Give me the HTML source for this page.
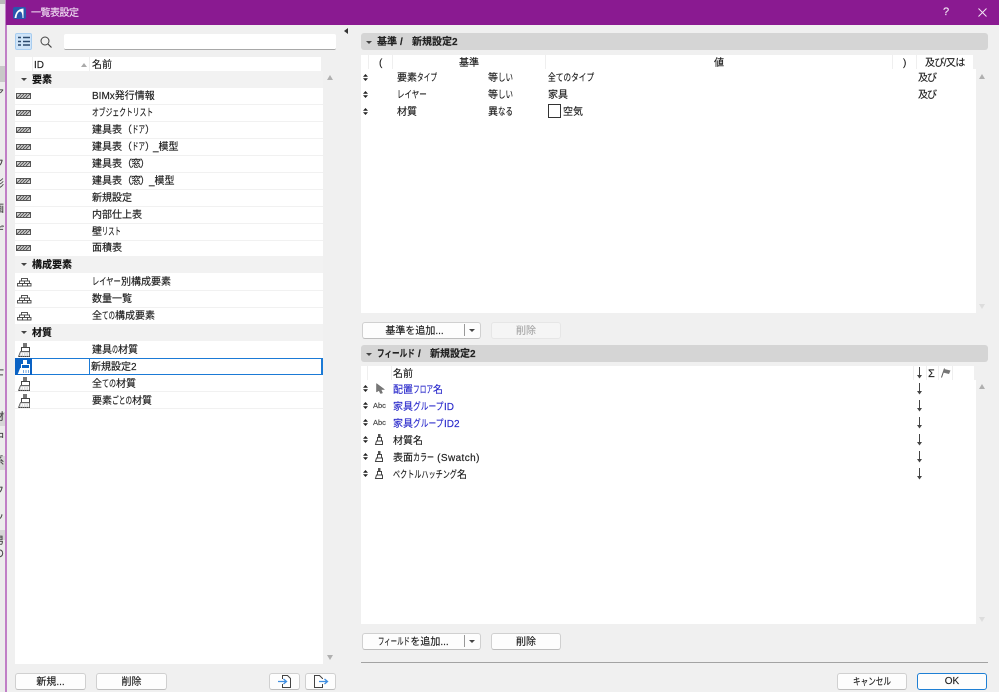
<!DOCTYPE html>
<html lang="ja"><head><meta charset="utf-8"><title>一覧表設定</title>
<style>
html,body{margin:0;padding:0;background:#f0f0f0;}
body{width:999px;height:692px;position:relative;overflow:hidden;font-family:"Liberation Sans","Noto Sans CJK JP",sans-serif;font-size:10px;color:#1c1c1c;-webkit-text-stroke:.15px currentColor;}
.a{position:absolute;}
.t{position:absolute;white-space:nowrap;line-height:14px;height:14px;margin-top:2px;}
.n{display:inline-block;white-space:nowrap;transform-origin:0 0;}
.b{font-weight:bold;color:#111;}
.bl{color:#2a2acb;}
.w{position:absolute;background:#fff;}
.sep{position:absolute;background:#f1f1f1;height:1px;left:15px;width:308px;}
.grp{position:absolute;background:#f2f2f2;left:15px;width:308px;height:17px;}
.btn{position:absolute;box-sizing:border-box;background:#fdfdfd;border:1px solid #d0d0d0;border-bottom:1.5px solid #bdbdbd;border-radius:3px;text-align:center;line-height:17px;height:17px;color:#222;}
.tri{position:absolute;width:0;height:0;border-left:3px solid transparent;border-right:3px solid transparent;border-top:3px solid #444;}
.up{position:absolute;width:0;height:0;border-left:3.5px solid transparent;border-right:3.5px solid transparent;border-bottom:5px solid #b0b0b0;}
.dn{position:absolute;width:0;height:0;border-left:3.5px solid transparent;border-right:3.5px solid transparent;border-top:5px solid #b0b0b0;}
.bar{position:absolute;left:361px;width:627px;height:17px;background:#d5d5d5;border-radius:3px;}
.vl{position:absolute;width:1px;background:#efefef;}
svg{position:absolute;overflow:visible;}
.strip{position:absolute;left:0;top:0;width:5px;height:692px;overflow:hidden;background:#ececec;}
.strip div{position:absolute;left:-6px;font-size:10px;line-height:10px;color:#444;}
.strip i{position:absolute;left:0;width:5px;background:#d6d6d6;}
</style></head><body>
<svg width="0" height="0" style="position:absolute">
<defs>
<g id="hatch"><rect x=".5" y=".5" width="14" height="5" fill="#d8d8d8" stroke="#555"/><path d="M1 5L5 1M4 5L8 1M7 5L11 1M10 5L14 1" stroke="#555" fill="none"/></g>
<g id="brick" fill="#fff" stroke="#444" stroke-width=".9"><rect x="4.500" y=".5" width="6" height="2.500"/><rect x="2.500" y="3" width="5" height="2.500"/><rect x="7.500" y="3" width="5" height="2.500"/><rect x=".5" y="5.500" width="5" height="2.500"/><rect x="5.500" y="5.500" width="5" height="2.500"/><rect x="10.500" y="5.500" width="3.500" height="2.500"/></g>
<g id="brush"><rect x="5" y="1" width="4" height="4.500" fill="#777"/><path d="M3.500 5.500H11.500V9.500H3.500Z" fill="#fff" stroke="#444"/><path d="M.5 14.500L2.500 9.500H11.500V14.500Z" fill="#dcdcdc" stroke="#555" stroke-width=".8"/><path d="M1 14.500H12" stroke="#444" stroke-dasharray="1 1" fill="none"/><path d="M3 13L4 11M5.500 13.500V11M8 13.500V11M10.500 13.500V11" stroke="#fff" fill="none"/></g>
<g id="brushw"><rect x="5" y="1" width="4" height="4.500" fill="#fff"/><path d="M3.500 5.500H11.500V9.500H3.500Z" fill="#0a62c4" stroke="#fff"/><path d="M.5 14.500L2.500 9.500H11.500V14.500Z" fill="#fff" stroke="#fff"/><path d="M5.500 14V11M8 14V11M10.500 14V11" stroke="#7aa9dd" fill="none"/></g>
<g id="smbrush"><rect x="3" y="0" width="2.500" height="3.500" fill="#555"/><path d="M2.500 3.500H6.500V7H2.500Z" fill="#fff" stroke="#444"/><path d="M.5 10.500L1.500 7H7.500V10.500Z" fill="#fff" stroke="#444"/></g>
<g id="ud"><path d="M2.500 0L5 2.800H0ZM2.500 7L0 4.200H5Z" fill="#222"/></g>
<g id="arr"><path d="M3.500 0V10.500" stroke="#444" stroke-width="1" fill="none"/><path d="M1 8L3.500 11.500L6 8Z" fill="#444"/></g>
</defs></svg>

<!-- background app strip -->
<div class="strip">
<i style="top:0;height:4px;background:#b9b9b9"></i>
<i style="top:66px;height:16px;background:#c8c8c8"></i>
<i style="top:412px;height:14px"></i>
<i style="top:456px;height:14px"></i>
<i style="top:530px;height:10px"></i>
<div style="top:90px">ア</div><div style="top:160px">フ</div><div style="top:180px">形</div><div style="top:205px">画</div><div style="top:227px">デ</div>
<div style="top:368px">士</div><div style="top:413px">材</div><div style="top:433px">中</div><div style="top:457px">系</div><div style="top:487px">フ</div><div style="top:513px">ッ</div><div style="top:537px">男</div><div style="top:550px">の</div>
</div>
<div class="a" style="left:5px;top:0;width:2px;height:692px;background:#c07fc6"></div>

<!-- title bar -->
<div class="a" style="left:6px;top:0;width:993px;height:25px;background:#8a1a91"></div>
<svg style="left:13px;top:7px" width="13" height="12" viewBox="0 0 13 12"><rect width="13" height="12" rx="2" fill="#2a58ad"/><path d="M1.500 11C2.500 4.500 5.500 2 10.500 1.500V11H9.500C9.500 6.500 8.500 4.500 7 4.500C5 5 3.800 7.500 3.500 11Z" fill="#fff"/></svg>
<div class="t" style="left:31px;top:5px;color:#efdcf1;letter-spacing:-.5px">一覧表設定</div>
<div class="t" style="left:943px;top:3px;color:#f3e6f4;font-size:11px">?</div>
<svg style="left:978px;top:8px" width="9" height="9"><path d="M.5 .5L8.500 8.500M8.500 .5L.5 8.500" stroke="#f3e6f4" fill="none"/></svg>

<!-- left toolbar -->
<div class="a" style="left:15px;top:33px;width:17px;height:17px;background:#cfe4f8;border:1px solid #a8cdf0;border-radius:2px;box-sizing:border-box"></div>
<svg style="left:18px;top:37px" width="12" height="9"><path d="M0 .5H3M5 .5H12M0 4.500H3M5 4.500H12M0 8H3M5 8H12" stroke="#2c4a6e" stroke-width="1.500" fill="none"/></svg>
<svg style="left:40px;top:36px" width="12" height="12"><circle cx="5" cy="5" r="4" fill="none" stroke="#444"/><path d="M8 8L11.500 11.500" stroke="#444" stroke-width="1.200"/></svg>
<div class="w" style="left:64px;top:34px;width:272px;height:16px;border-bottom:1.500px solid #a8a8a8;box-sizing:border-box;border-radius:2px"></div>

<!-- left list -->
<div class="w" style="left:15px;top:57px;width:306px;height:14px"></div>
<div class="vl" style="left:32px;top:57px;height:14px"></div>
<div class="vl" style="left:89px;top:57px;height:14px"></div>
<div class="t" style="left:34px;top:57px">ID</div>
<div class="a" style="left:81px;top:63px;width:0;height:0;border-left:3.500px solid transparent;border-right:3.500px solid transparent;border-bottom:4px solid #aaa"></div>
<div class="t" style="left:92px;top:57px">名前</div>
<div class="w" style="left:15px;top:71px;width:308px;height:593px"></div>

<div class="grp" style="top:71px"></div><div class="tri" style="left:21px;top:78px"></div><div class="t b" style="left:32px;top:72px">要素</div>
<div class="grp" style="top:256px"></div><div class="tri" style="left:21px;top:263px"></div><div class="t b" style="left:32px;top:257px">構成要素</div>
<div class="grp" style="top:324px"></div><div class="tri" style="left:21px;top:331px"></div><div class="t b" style="left:32px;top:325px">材質</div>

<div class="sep" style="top:104px"></div><div class="sep" style="top:121px"></div><div class="sep" style="top:138px"></div><div class="sep" style="top:155px"></div><div class="sep" style="top:172px"></div><div class="sep" style="top:189px"></div><div class="sep" style="top:206px"></div><div class="sep" style="top:223px"></div><div class="sep" style="top:240px"></div>
<div class="sep" style="top:290px"></div><div class="sep" style="top:307px"></div>
<div class="sep" style="top:391px"></div><div class="sep" style="top:408px"></div>

<svg style="left:16px;top:93px" width="15" height="6"><use href="#hatch"/></svg>
<svg style="left:16px;top:110px" width="15" height="6"><use href="#hatch"/></svg>
<svg style="left:16px;top:127px" width="15" height="6"><use href="#hatch"/></svg>
<svg style="left:16px;top:144px" width="15" height="6"><use href="#hatch"/></svg>
<svg style="left:16px;top:161px" width="15" height="6"><use href="#hatch"/></svg>
<svg style="left:16px;top:178px" width="15" height="6"><use href="#hatch"/></svg>
<svg style="left:16px;top:195px" width="15" height="6"><use href="#hatch"/></svg>
<svg style="left:16px;top:212px" width="15" height="6"><use href="#hatch"/></svg>
<svg style="left:16px;top:229px" width="15" height="6"><use href="#hatch"/></svg>
<svg style="left:16px;top:245px" width="15" height="6"><use href="#hatch"/></svg>

<svg style="left:17px;top:278px" width="15" height="9"><use href="#brick"/></svg>
<svg style="left:17px;top:295px" width="15" height="9"><use href="#brick"/></svg>
<svg style="left:17px;top:312px" width="15" height="9"><use href="#brick"/></svg>

<div class="a" style="left:15px;top:358px;width:308px;height:17px;box-sizing:border-box;background:#fff;border:2px solid #1b7ad6;border-width:1px 2px 1px 1px"></div>
<div class="a" style="left:15px;top:358px;width:17px;height:17px;background:#0a62c4"></div>
<div class="a" style="left:89px;top:358px;width:1px;height:17px;background:#1b7ad6"></div>

<svg style="left:18px;top:342px" width="14" height="15"><use href="#brush"/></svg>
<svg style="left:18px;top:359px" width="14" height="15"><use href="#brushw"/></svg>
<svg style="left:18px;top:376px" width="14" height="15"><use href="#brush"/></svg>
<svg style="left:18px;top:393px" width="14" height="15"><use href="#brush"/></svg>

<div class="t" style="left:92px;top:88px">BIMx発行情報</div>
<div class="t" style="left:92px;top:105px"><span class="n" style="width:61px;transform:scaleX(.68)">オブジェクトリスト</span></div>
<div class="t" style="left:92px;top:122px">建具表（<span class="n" style="width:13px;transform:scaleX(.65)">ドア</span>）</div>
<div class="t" style="left:92px;top:139px">建具表（<span class="n" style="width:13px;transform:scaleX(.65)">ドア</span><span style="letter-spacing:-2px">）</span>_模型</div>
<div class="t" style="left:92px;top:156px">建具表<span style="letter-spacing:-1px">（窓）</span></div>
<div class="t" style="left:92px;top:173px">建具表<span style="letter-spacing:-1px">（窓）</span>_模型</div>
<div class="t" style="left:92px;top:190px">新規設定</div>
<div class="t" style="left:92px;top:207px">内部仕上表</div>
<div class="t" style="left:92px;top:224px">壁<span class="n" style="width:19px;transform:scaleX(.63)">リスト</span></div>
<div class="t" style="left:92px;top:240px">面積表</div>
<div class="t" style="left:92px;top:274px"><span class="n" style="width:29px;transform:scaleX(.725)">レイヤー</span>別構成要素</div>
<div class="t" style="left:92px;top:291px">数量一覧</div>
<div class="t" style="left:92px;top:308px">全<span class="n" style="width:13px;transform:scaleX(.65)">ての</span>構成要素</div>
<div class="t" style="left:92px;top:342px">建具<span class="n" style="width:6px;transform:scaleX(.6)">の</span>材質</div>
<div class="t" style="left:91px;top:359px">新規設定2</div>
<div class="t" style="left:92px;top:376px">全<span class="n" style="width:14px;transform:scaleX(.7)">ての</span>材質</div>
<div class="t" style="left:92px;top:393px">要素<span class="n" style="width:20px;transform:scaleX(.67)">ごとの</span>材質</div>

<div class="up" style="left:327px;top:75px"></div>
<div class="dn" style="left:327px;top:655px"></div>

<div class="btn" style="left:15px;top:673px;width:71px">新規...</div>
<div class="btn" style="left:96px;top:673px;width:71px">削除</div>
<div class="btn" style="left:269px;top:673px;width:31px"></div>
<div class="btn" style="left:305px;top:673px;width:31px"></div>
<svg style="left:278px;top:675px" width="14" height="13"><path d="M4.500 4V.5H9.500L12.500 3.500V12.500H4.500V9" fill="#fff" stroke="#444"/><path d="M0 6.500H8M5.500 4L8.500 6.500L5.500 9" stroke="#3f8ee0" stroke-width="1.300" fill="none"/></svg>
<svg style="left:313px;top:675px" width="16" height="13"><path d="M9.500 4V3.500L6.500 .5H1.500V12.500H9.500V9" fill="#fff" stroke="#444"/><path d="M6 6.500H14M11.500 4L14.500 6.500L11.500 9" stroke="#3f8ee0" stroke-width="1.300" fill="none"/></svg>

<!-- splitter arrow -->
<div class="a" style="left:344px;top:28px;width:0;height:0;border-top:3.500px solid transparent;border-bottom:3.500px solid transparent;border-right:4px solid #333"></div>

<!-- criteria section -->
<div class="bar" style="top:33px"></div><div class="tri" style="left:366px;top:41px"></div>
<div class="t b" style="left:377px;top:34px;color:#222">基準</div>
<div class="t b" style="left:400px;top:34px;color:#222">/</div>
<div class="t b" style="left:412px;top:34px;color:#222">新規設定2</div>
<div class="w" style="left:361px;top:55px;width:612px;height:14px"></div>
<div class="w" style="left:361px;top:69px;width:615px;height:244px"></div>
<div class="vl" style="left:368px;top:55px;height:14px"></div>
<div class="vl" style="left:392px;top:55px;height:14px"></div>
<div class="vl" style="left:545px;top:55px;height:14px"></div>
<div class="vl" style="left:892px;top:55px;height:14px"></div>
<div class="vl" style="left:916px;top:55px;height:14px"></div>
<div class="t" style="left:379px;top:55px">(</div>
<div class="t" style="left:459px;top:55px">基準</div>
<div class="t" style="left:714px;top:55px">値</div>
<div class="t" style="left:903px;top:55px">)</div>
<div class="t" style="left:925px;top:55px;letter-spacing:-.6px">及び/又は</div>

<svg style="left:363px;top:74px" width="5" height="7"><use href="#ud"/></svg>
<svg style="left:363px;top:91px" width="5" height="7"><use href="#ud"/></svg>
<svg style="left:363px;top:108px" width="5" height="7"><use href="#ud"/></svg>
<div class="t" style="left:397px;top:70px">要素<span class="n" style="width:20px;transform:scaleX(.67)">タイプ</span></div>
<div class="t" style="left:397px;top:87px"><span class="n" style="width:30px;transform:scaleX(.75)">レイヤー</span></div>
<div class="t" style="left:397px;top:104px">材質</div>
<div class="t" style="left:488px;top:70px">等<span class="n" style="width:15px;transform:scaleX(.75)">しい</span></div>
<div class="t" style="left:488px;top:87px">等<span class="n" style="width:15px;transform:scaleX(.75)">しい</span></div>
<div class="t" style="left:488px;top:104px">異<span class="n" style="width:15px;transform:scaleX(.75)">なる</span></div>
<div class="t" style="left:548px;top:70px"><span class="n" style="width:46px;transform:scaleX(.77)">全てのタイプ</span></div>
<div class="t" style="left:548px;top:87px">家具</div>
<div class="a" style="left:548px;top:104px;width:13px;height:14px;box-sizing:border-box;border:1px solid #333;background:#fff"></div>
<div class="t" style="left:563px;top:104px">空気</div>
<div class="t" style="left:918px;top:70px;letter-spacing:-1px">及び</div>
<div class="t" style="left:918px;top:87px;letter-spacing:-1px">及び</div>
<div class="up" style="left:979px;top:74px"></div>
<div class="dn" style="left:979px;top:304px;border-top-color:#ddd"></div>

<div class="btn" style="left:362px;top:322px;width:119px;padding-right:14px">基準を追加...</div>
<div class="a" style="left:464px;top:324px;width:1px;height:12px;background:#999"></div>
<div class="tri" style="left:469px;top:329px"></div>
<div class="btn" style="left:491px;top:322px;width:70px;background:#f5f5f5;border-color:#e6e6e6;color:#aaa">削除</div>

<!-- fields section -->
<div class="bar" style="top:345px"></div><div class="tri" style="left:366px;top:353px"></div>
<div class="t b" style="left:377px;top:346px;color:#222"><span class="n" style="width:38px;transform:scaleX(.76)">フィールド</span></div>
<div class="t b" style="left:418px;top:346px;color:#222">/</div>
<div class="t b" style="left:430px;top:346px;color:#222">新規設定2</div>
<div class="w" style="left:361px;top:366px;width:613px;height:14px"></div>
<div class="w" style="left:361px;top:380px;width:615px;height:244px"></div>
<div class="vl" style="left:367px;top:366px;height:14px"></div>
<div class="vl" style="left:391px;top:366px;height:14px"></div>
<div class="vl" style="left:913px;top:366px;height:14px"></div>
<div class="vl" style="left:926px;top:366px;height:14px"></div>
<div class="vl" style="left:938px;top:366px;height:14px"></div>
<div class="vl" style="left:952px;top:366px;height:14px"></div>
<div class="t" style="left:393px;top:366px">名前</div>
<svg style="left:916px;top:367px" width="7" height="12"><use href="#arr"/></svg>
<div class="t" style="left:928px;top:365px;font-size:11px">Σ</div>
<svg style="left:941px;top:368px" width="10" height="10"><path d="M.5 9.500L3.500 .5" stroke="#555" fill="none"/><path d="M3 1L9.500 2.500L8 6L2 4.500Z" fill="#777"/></svg>

<svg style="left:363px;top:385px" width="5" height="7"><use href="#ud"/></svg>
<svg style="left:363px;top:402px" width="5" height="7"><use href="#ud"/></svg>
<svg style="left:363px;top:419px" width="5" height="7"><use href="#ud"/></svg>
<svg style="left:363px;top:436px" width="5" height="7"><use href="#ud"/></svg>
<svg style="left:363px;top:453px" width="5" height="7"><use href="#ud"/></svg>
<svg style="left:363px;top:470px" width="5" height="7"><use href="#ud"/></svg>
<svg style="left:376px;top:383px" width="9" height="11"><path d="M.5 .5L8.500 6.500H5L6.500 10L4.500 10.500L3 7.500L.5 9Z" fill="#777" stroke="#666" stroke-width=".5"/></svg>
<div class="t" style="left:373px;top:397px;font-size:7.500px;color:#444">Abc</div>
<div class="t" style="left:373px;top:414px;font-size:7.500px;color:#444">Abc</div>
<svg style="left:375px;top:434px" width="9" height="11"><use href="#smbrush"/></svg>
<svg style="left:375px;top:451px" width="9" height="11"><use href="#smbrush"/></svg>
<svg style="left:375px;top:468px" width="9" height="11"><use href="#smbrush"/></svg>

<div class="t bl" style="left:393px;top:382px">配置<span class="n" style="width:20px;transform:scaleX(.67)">フロア</span>名</div>
<div class="t bl" style="left:393px;top:399px">家具<span class="n" style="width:31px;transform:scaleX(.775)">グループ</span>ID</div>
<div class="t bl" style="left:393px;top:416px">家具<span class="n" style="width:31px;transform:scaleX(.775)">グループ</span>ID2</div>
<div class="t" style="left:393px;top:433px">材質名</div>
<div class="t" style="left:393px;top:450px">表面<span class="n" style="width:21px;transform:scaleX(.7)">カラー</span><span style="letter-spacing:.4px">&nbsp;(Swatch)</span></div>
<div class="t" style="left:393px;top:467px"><span class="n" style="width:64px;transform:scaleX(.71)">ベクトルハッチング</span>名</div>

<svg style="left:916px;top:383px" width="7" height="12"><use href="#arr"/></svg>
<svg style="left:916px;top:400px" width="7" height="12"><use href="#arr"/></svg>
<svg style="left:916px;top:417px" width="7" height="12"><use href="#arr"/></svg>
<svg style="left:916px;top:434px" width="7" height="12"><use href="#arr"/></svg>
<svg style="left:916px;top:451px" width="7" height="12"><use href="#arr"/></svg>
<svg style="left:916px;top:468px" width="7" height="12"><use href="#arr"/></svg>
<div class="up" style="left:979px;top:384px"></div>
<div class="dn" style="left:979px;top:617px;border-top-color:#ddd"></div>

<div class="btn" style="left:362px;top:633px;width:119px;padding-right:16px"><span class="n" style="width:32px;transform:scaleX(.64)">フィールド</span>を追加...</div>
<div class="a" style="left:464px;top:635px;width:1px;height:12px;background:#999"></div>
<div class="tri" style="left:469px;top:640px"></div>
<div class="btn" style="left:491px;top:633px;width:70px">削除</div>

<div class="a" style="left:361px;top:662px;width:627px;height:1px;background:#a3a3a3"></div>
<div class="btn" style="left:837px;top:673px;width:70px"><span class="n" style="width:38px;transform:scaleX(.76)">キャンセル</span></div>
<div class="btn" style="left:917px;top:673px;width:70px;border:1.500px solid #1e7fd4;line-height:15px">OK</div>
</body></html>
